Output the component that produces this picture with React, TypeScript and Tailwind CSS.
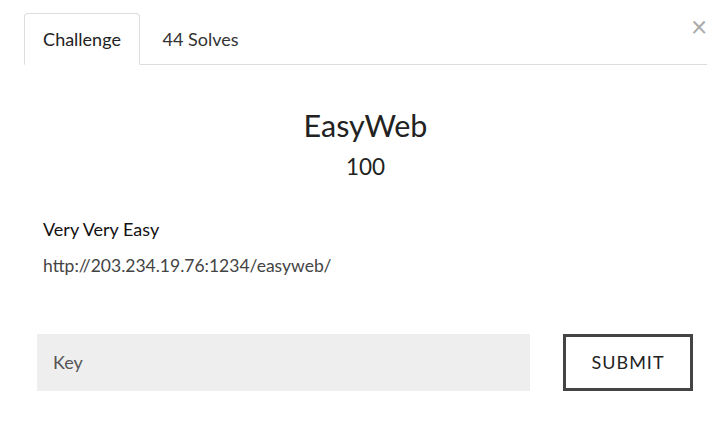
import React from "react";

export default function App() {
  return (
    <div className="w-[720px] h-[445px] bg-white overflow-hidden relative" style={{ fontFamily: "Lato, 'Open Sans', sans-serif" }}>
      <button className="absolute left-[691px] top-[12px] text-[28px] leading-none text-[#aaaaaa]">×</button>
      <div className="pt-[13px] pl-[24px] pr-[13px]">
        <div className="flex border-b border-[#dddddd] h-[52px]">
          <div className="w-[116px] h-[52px] -mb-px border border-[#dddddd] border-b-white rounded-t-[4px] bg-white flex items-center justify-center text-[18px] text-[#222222]">
            Challenge
          </div>
          <div className="w-[121px] h-[52px] flex items-center justify-center text-[18px] text-[#333333]">
            44 Solves
          </div>
        </div>
      </div>
      <div className="flex flex-col items-center mt-[42px] pl-[24px] pr-[13px] text-[#222222]">
        <div className="text-[30.5px] leading-[36px]">EasyWeb</div>
        <div className="text-[22.5px] leading-[28px] mt-[10px]">100</div>
      </div>
      <div className="pl-[43px] mt-[36px]">
        <div className="text-[18px] leading-[24px] text-[#111111]">Very Very Easy</div>
        <div className="text-[17.5px] leading-[24px] text-[#444444] mt-[13px]">http://203.234.19.76:1234/easyweb/</div>
      </div>
      <div className="flex mt-[56px] pl-[37px]">
        <div className="w-[493px] h-[57px] bg-[#eeeeee] flex items-center pl-[16px] text-[18px] text-[#555555]">Key</div>
        <button className="ml-[33px] w-[130px] h-[57px] border-[3px] border-[#444444] bg-white text-[18px] tracking-[1px] text-[#222222] flex items-center justify-center">
          SUBMIT
        </button>
      </div>
    </div>
  );
}
